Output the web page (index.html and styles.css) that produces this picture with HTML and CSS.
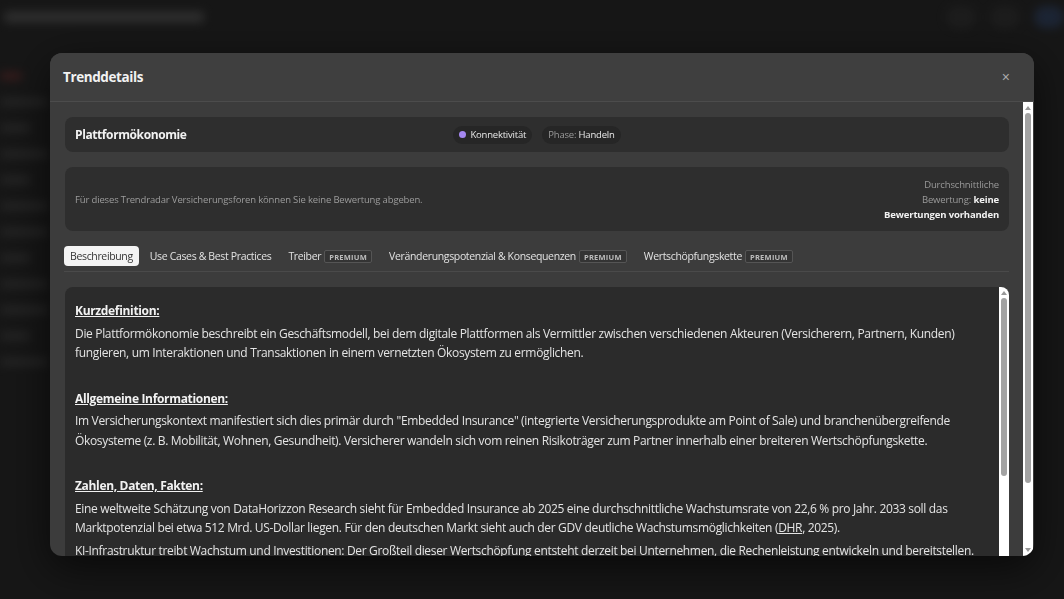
FILE: index.html
```html
<!DOCTYPE html>
<html lang="de">
<head>
    <meta charset="UTF-8">
    <meta name="viewport" content="width=device-width, initial-scale=1.0">
    <title>Trenddetails</title>
<link rel="stylesheet" href="styles.css">
</head>
<body>

<div class="app" aria-hidden="true">
  <div class="topbar">
    <div class="brand"></div>
    <div class="top-icons">
      <span class="ticon"></span>
      <span class="ticon"></span>
      <span class="ticon blue"></span>
    </div>
  </div>
  <div class="side">
    <span class="sline red"></span>
    <span class="sline"></span>
    <span class="sline short"></span>
    <span class="sline"></span>
    <span class="sline short"></span>
    <span class="sline"></span>
    <span class="sline"></span>
    <span class="sline short"></span>
    <span class="sline"></span>
    <span class="sline"></span>
    <span class="sline short"></span>
    <span class="sline"></span>
  </div>
</div>

<div class="overlay">
  <div class="modal">
    <header class="modal-head">
      <h1>Trenddetails</h1>
      <button class="close" aria-label="Schließen">&times;</button>
    </header>

    <div class="modal-body">
      <div class="scroll-area">
        <section class="card trend-card">
          <h2>Plattformökonomie</h2>
          <div class="badges">
            <span class="badge"><span class="dot"></span>Konnektivität</span>
            <span class="badge"><span class="muted">Phase:</span>&nbsp;Handeln</span>
          </div>
          <div></div>
        </section>

        <section class="card rating-card">
          <p class="note">Für dieses Trendradar Versicherungsforen können Sie keine Bewertung abgeben.</p>
          <p class="avg">
            <span class="muted">Durchschnittliche</span><br>
            <span class="muted">Bewertung:</span> <b>keine</b><br>
            <b>Bewertungen vorhanden</b>
          </p>
        </section>

        <nav class="tabs">
          <button class="tab active">Beschreibung</button>
          <button class="tab">Use Cases &amp; Best Practices</button>
          <button class="tab">Treiber <span class="premium">PREMIUM</span></button>
          <button class="tab">Veränderungspotenzial &amp; Konsequenzen <span class="premium">PREMIUM</span></button>
          <button class="tab">Wertschöpfungskette <span class="premium">PREMIUM</span></button>
        </nav>

        <div class="panel">
          <article class="content">
            <p class="head first">Kurzdefinition:</p>
            <p>Die Plattformökonomie beschreibt ein Geschäftsmodell, bei dem digitale Plattformen als Vermittler zwischen verschiedenen Akteuren (Versicherern, Partnern, Kunden) fungieren, um Interaktionen und Transaktionen in einem vernetzten Ökosystem zu ermöglichen.</p>
            <p class="head">Allgemeine Informationen:</p>
            <p>Im Versicherungskontext manifestiert sich dies primär durch "Embedded Insurance" (integrierte Versicherungsprodukte am Point of Sale) und branchenübergreifende Ökosysteme (z. B. Mobilität, Wohnen, Gesundheit). Versicherer wandeln sich vom reinen Risikoträger zum Partner innerhalb einer breiteren Wertschöpfungskette.</p>
            <p class="head">Zahlen, Daten, Fakten:</p>
            <p>Eine weltweite Schätzung von DataHorizzon Research sieht für Embedded Insurance ab 2025 eine durchschnittliche Wachstumsrate von 22,6 % pro Jahr. 2033 soll das Marktpotenzial bei etwa 512 Mrd. US-Dollar liegen. Für den deutschen Markt sieht auch der GDV deutliche Wachstumsmöglichkeiten (<a href="#">DHR</a>, 2025).</p>
            <p class="gap">KI-Infrastruktur treibt Wachstum und Investitionen: Der Großteil dieser Wertschöpfung entsteht derzeit bei Unternehmen, die Rechenleistung entwickeln und bereitstellen.</p>
          </article>
          <div class="vbar inner">
            <span class="arrow up"></span>
            <span class="thumb"></span>
            <span class="arrow down"></span>
          </div>
        </div>
      </div>

      <div class="vbar outer">
        <span class="arrow up"></span>
        <span class="thumb"></span>
        <span class="arrow down"></span>
      </div>
    </div>
  </div>
</div>

</body>
</html>
```

FILE: styles.css
```css
* { box-sizing: border-box }

body {
  margin: 0;
  height: 599px;
  overflow: hidden;
  background: #202020;
  font-family: "Open Sans", "Noto Sans", sans-serif;
  color: #e6e6e6;
}

/* blurred page behind the dialog */
.app {
  filter: blur(5px);
  opacity: 0.8;
}

.topbar {
  display: flex;
  justify-content: space-between;
  align-items: center;
  height: 34px;
  padding: 0 0 0 4px;
}

.brand {
  width: 200px;
  height: 12px;
  background: #4a4a4a;
  border-radius: 4px;
}

.top-icons {
  display: flex;
  gap: 14px;
}

.ticon {
  width: 30px;
  height: 22px;
  border-radius: 11px;
  background: #2c2c2c;
}

.ticon.blue {
  background: #2b3a55;
}

.side {
  display: flex;
  flex-direction: column;
  gap: 18px;
  padding: 38px 0 0 0;
  width: 60px;
}

.sline {
  height: 8px;
  width: 48px;
  background: #3a3a3a;
  border-radius: 3px;
}

.sline.short { width: 30px }
.sline.red { background: #5a2a2a; width: 22px }

.overlay {
  position: fixed;
  inset: 0;
  background: rgba(0, 0, 0, 0.3);
  padding: 53px 0 0 50px;
}

.modal {
  width: 984px;
  height: 503px;
  background: #3c3c3c;
  border-radius: 12px;
  box-shadow: 0 12px 40px rgba(0, 0, 0, 0.6);
  display: flex;
  flex-direction: column;
  overflow: hidden;
}

.modal-head {
  display: flex;
  justify-content: space-between;
  align-items: center;
  flex: none;
  height: 49px;
  padding: 0 24px 0 13px;
  background: #3f3f3f;
  border-bottom: 1px solid #4c4c4c;
}

.modal-head h1 {
  margin: 0;
  font-size: 13.5px;
  font-weight: 700;
  letter-spacing: -0.4px;
  color: #f2f2f2;
}

.close {
  background: transparent;
  border: 0;
  color: #aaa;
  font-size: 14px;
  cursor: pointer;
  padding: 0;
}

.modal-body {
  flex: 1;
  display: flex;
  min-height: 0;
}

.scroll-area {
  flex: 1;
  overflow: hidden;
  padding: 15px 14px 0 15px;
}

/* drawn scrollbars */
.vbar {
  flex: none;
  display: flex;
  flex-direction: column;
  align-items: center;
  width: 10px;
  background: #fff;
  padding-top: 4px;
}

.vbar.outer {
  margin-right: 1px;
}

.vbar .arrow {
  width: 0;
  height: 0;
  border-left: 3px solid transparent;
  border-right: 3px solid transparent;
}

.vbar .up {
  border-bottom: 4px solid #999;
}

.vbar .down {
  border-top: 4px solid #999;
  margin-top: auto;
  margin-bottom: 4px;
}

.vbar .thumb {
  width: 6px;
  border-radius: 3px;
  background: #a2a2a2;
  margin-top: 3px;
}

.vbar.outer .thumb { height: 370px }
.vbar.inner .thumb { height: 178px }

.card {
  background: #2e2e2e;
  border-radius: 8px;
  padding: 0 10px;
}

.trend-card {
  display: grid;
  grid-template-columns: 1fr auto 1fr;
  align-items: center;
  height: 35px;
}

.trend-card h2 {
  margin: 0;
  font-size: 12px;
  font-weight: 700;
  letter-spacing: -0.4px;
  color: #f2f2f2;
}

.badges {
  display: flex;
  gap: 10px;
}

.badge {
  display: inline-flex;
  align-items: center;
  height: 18px;
  padding: 0 6px;
  border-radius: 9px;
  background: #262626;
  font-size: 9.5px;
  letter-spacing: -0.2px;
  color: #e8e8e8;
}

.dot {
  width: 7px;
  height: 7px;
  border-radius: 50%;
  background: #a487f0;
  margin-right: 4px;
}

.muted {
  color: #9a9a9a;
}

.rating-card {
  display: flex;
  justify-content: space-between;
  align-items: center;
  height: 64px;
  margin-top: 15px;
}

.note {
  margin: 0;
  font-size: 9.5px;
  letter-spacing: -0.15px;
  color: #9c9c9c;
}

.avg {
  margin: 0;
  text-align: right;
  font-size: 9.5px;
  letter-spacing: -0.15px;
  line-height: 15px;
  color: #f2f2f2;
}

.tabs {
  display: flex;
  align-items: center;
  gap: 5px;
  margin-top: 15px;
  margin-left: -1px;
  padding-bottom: 5px;
  border-bottom: 1px solid #4a4a4a;
}

.tab {
  display: inline-flex;
  align-items: center;
  height: 20px;
  padding: 0 6px;
  border: 0;
  border-radius: 4px;
  background: transparent;
  font-family: inherit;
  font-size: 10.5px;
  letter-spacing: -0.35px;
  color: #e2e2e2;
  white-space: nowrap;
  cursor: pointer;
}

.tab.active {
  background: #f4f4f4;
  color: #333;
}

.premium {
  margin-left: 3px;
  padding: 0 4px;
  height: 13px;
  line-height: 12px;
  border: 1px solid #555;
  border-radius: 2px;
  background: #343434;
  font-size: 7.5px;
  font-weight: 700;
  letter-spacing: 0.25px;
  color: #bdbdbd;
}

.panel {
  display: flex;
  margin-top: 15px;
  height: 300px;
  background: #2b2b2b;
  border-radius: 8px;
  overflow: hidden;
}

.content {
  flex: 1;
  padding: 14px 14px 0 10px;
  font-size: 12px;
  letter-spacing: -0.33px;
  line-height: 19.5px;
  color: #e4e4e4;
}

.content p {
  margin: 0;
}

.content .head {
  font-weight: 700;
  text-decoration: underline;
  color: #f2f2f2;
  margin-top: 26px;
  margin-bottom: 3px;
}

.content .head.first {
  margin-top: 0;
}

.content .gap {
  margin-top: 3px;
}

.content a {
  color: inherit;
}
```
